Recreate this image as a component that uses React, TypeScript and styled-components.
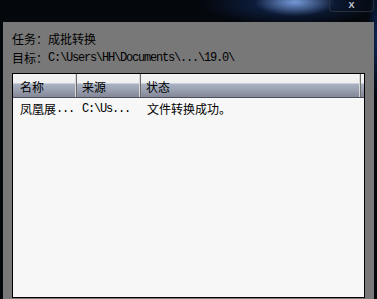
import styled, { createGlobalStyle } from "styled-components";

const Global = createGlobalStyle`
  html, body {
    margin: 0;
    padding: 0;
    background: #000;
  }
`;

const Window = styled.div`
  width: 377px;
  height: 299px;
  overflow: hidden;
  display: flex;
  flex-direction: column;
  background:
    radial-gradient(ellipse 40px 14px at 295px 2px, rgba(150, 190, 255, 0.75), transparent),
    radial-gradient(ellipse 90px 22px at 290px 4px, rgba(30, 70, 150, 0.55), transparent),
    radial-gradient(ellipse 10px 60px at 377px 40px, rgba(20, 60, 140, 0.6), transparent),
    #04070c;
  font-family: "Noto Sans CJK SC", "Liberation Sans", sans-serif;
`;

const TitleBar = styled.div`
  height: 22px;
  flex: none;
  display: flex;
  justify-content: flex-end;
  padding-right: 3px;
`;

const CloseButton = styled.div`
  width: 45px;
  height: 12px;
  box-sizing: border-box;
  border: 1px solid #2a3038;
  border-top: none;
  border-radius: 0 0 4px 4px;
  display: flex;
  justify-content: center;
  align-items: flex-start;
  color: #c8ced6;
  font: bold 9px/10px "Liberation Sans", sans-serif;
`;

const Panel = styled.div`
  flex: 1;
  margin: 0 3px;
  background: #787878;
  padding: 7px 9px 0 9px;
  display: flex;
  flex-direction: column;
`;

const InfoLine = styled.div`
  height: 19px;
  display: flex;
  align-items: center;
  font-size: 12px;
  color: #000;
  white-space: nowrap;
`;

const Mono = styled.span`
  font-family: "Liberation Mono", monospace;
  font-size: 12px;
  letter-spacing: -1.2px;
`;

const ListBox = styled.div`
  margin-top: 6px;
  height: 225px;
  box-sizing: border-box;
  border: 1px solid #000;
  background: #f7f7f7;
  display: flex;
  flex-direction: column;
`;

const Header = styled.div`
  height: 23px;
  display: flex;
  border-bottom: 1px solid #4a4d55;
  background: linear-gradient(
    to bottom,
    #f4f4f4 0,
    #f0f0f0 9px,
    #a9b2c2 10px,
    #9aa1b1 16px,
    #868a9a 22px
  );
`;

const HeadCell = styled.div<{ $w: number; $pad: number }>`
  width: ${({ $w }) => $w}px;
  flex: none;
  box-sizing: border-box;
  padding-left: ${({ $pad }) => $pad}px;
  border-right: 1px solid #6c6c6c;
  box-shadow: inset -1px 0 0 #d8d8d8;
  display: flex;
  align-items: center;
  padding-top: 2px;
  font-size: 12px;
  color: #000;
`;

const Row = styled.div`
  height: 17px;
  display: flex;
  margin-top: 2px;
`;

const Cell = styled.div<{ $w: number; $pad: number }>`
  width: ${({ $w }) => $w}px;
  flex: none;
  box-sizing: border-box;
  padding-left: ${({ $pad }) => $pad}px;
  display: flex;
  align-items: center;
  font-size: 12px;
  color: #000;
  white-space: nowrap;
  overflow: hidden;
`;

const columns = [
  { title: "名称", w: 64, pad: 7 },
  { title: "来源", w: 64, pad: 5 },
  { title: "状态", w: 220, pad: 5 },
];

export default function App() {
  return (
    <>
      <Global />
      <Window>
        <TitleBar>
          <CloseButton>X</CloseButton>
        </TitleBar>
        <Panel>
          <InfoLine>任务：成批转换</InfoLine>
          <InfoLine>
            目标：<Mono>C:\Users\HH\Documents\...\19.0\</Mono>
          </InfoLine>
          <ListBox>
            <Header>
              {columns.map((c) => (
                <HeadCell key={c.title} $w={c.w} $pad={c.pad}>
                  {c.title}
                </HeadCell>
              ))}
            </Header>
            <Row>
              <Cell $w={64} $pad={7}>
                凤凰展<Mono>...</Mono>
              </Cell>
              <Cell $w={64} $pad={5}>
                <Mono>C:\Us...</Mono>
              </Cell>
              <Cell $w={220} $pad={6}>
                文件转换成功。
              </Cell>
            </Row>
          </ListBox>
        </Panel>
      </Window>
    </>
  );
}
